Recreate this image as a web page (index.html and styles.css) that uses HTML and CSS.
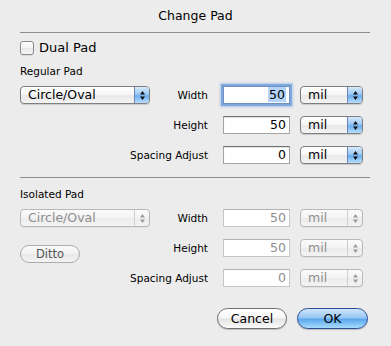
FILE: index.html
```html
<!DOCTYPE html>
<html>
<head>
<meta charset="utf-8">
<title>Change Pad</title>
<link rel="stylesheet" href="styles.css">
</head>
<body>
<div class="dialog">
  <div class="title">Change Pad</div>
  <div class="sep"></div>

  <div class="check"><span class="box"></span><span class="check-text">Dual Pad</span></div>

  <div class="group-label">Regular Pad</div>
  <div class="grid">
    <div class="popup wide"><span class="popup-text">Circle/Oval</span><span class="arrows"><svg width="7" height="11" viewBox="0 0 7 11"><path d="M3.5 1 L6 4.5 L1 4.5 Z M3.5 10 L6 6.5 L1 6.5 Z" fill="#111"/></svg></span></div>
    <div class="lbl">Width</div>
    <div class="field focus"><span class="sel">50</span></div>
    <div class="popup unit"><span class="popup-text">mil</span><span class="arrows"><svg width="7" height="11" viewBox="0 0 7 11"><path d="M3.5 1 L6 4.5 L1 4.5 Z M3.5 10 L6 6.5 L1 6.5 Z" fill="#111"/></svg></span></div>

    <div class="empty"></div>
    <div class="lbl">Height</div>
    <div class="field">50</div>
    <div class="popup unit"><span class="popup-text">mil</span><span class="arrows"><svg width="7" height="11" viewBox="0 0 7 11"><path d="M3.5 1 L6 4.5 L1 4.5 Z M3.5 10 L6 6.5 L1 6.5 Z" fill="#111"/></svg></span></div>

    <div class="empty"></div>
    <div class="lbl">Spacing Adjust</div>
    <div class="field">0</div>
    <div class="popup unit"><span class="popup-text">mil</span><span class="arrows"><svg width="7" height="11" viewBox="0 0 7 11"><path d="M3.5 1 L6 4.5 L1 4.5 Z M3.5 10 L6 6.5 L1 6.5 Z" fill="#111"/></svg></span></div>
  </div>

  <div class="sep sep-mid"></div>

  <div class="group-label">Isolated Pad</div>
  <div class="grid disabled">
    <div class="popup wide"><span class="popup-text">Circle/Oval</span><span class="arrows"><svg width="7" height="11" viewBox="0 0 7 11"><path d="M3.5 1 L6 4.5 L1 4.5 Z M3.5 10 L6 6.5 L1 6.5 Z" fill="#9a9a9a"/></svg></span></div>
    <div class="lbl">Width</div>
    <div class="field">50</div>
    <div class="popup unit"><span class="popup-text">mil</span><span class="arrows"><svg width="7" height="11" viewBox="0 0 7 11"><path d="M3.5 1 L6 4.5 L1 4.5 Z M3.5 10 L6 6.5 L1 6.5 Z" fill="#9a9a9a"/></svg></span></div>

    <div class="ditto-cell"><span class="ditto">Ditto</span></div>
    <div class="lbl">Height</div>
    <div class="field">50</div>
    <div class="popup unit"><span class="popup-text">mil</span><span class="arrows"><svg width="7" height="11" viewBox="0 0 7 11"><path d="M3.5 1 L6 4.5 L1 4.5 Z M3.5 10 L6 6.5 L1 6.5 Z" fill="#9a9a9a"/></svg></span></div>

    <div class="empty"></div>
    <div class="lbl">Spacing Adjust</div>
    <div class="field">0</div>
    <div class="popup unit"><span class="popup-text">mil</span><span class="arrows"><svg width="7" height="11" viewBox="0 0 7 11"><path d="M3.5 1 L6 4.5 L1 4.5 Z M3.5 10 L6 6.5 L1 6.5 Z" fill="#9a9a9a"/></svg></span></div>
  </div>

  <div class="buttons">
    <span class="btn cancel">Cancel</span>
    <span class="btn ok">OK</span>
  </div>
</div>
</body>
</html>
```

FILE: styles.css
```css
html, body {
  margin: 0;
  padding: 0;
  background: #ececec;
}

.dialog {
  width: 391px;
  height: 346px;
  background: #ececec;
  font-family: "DejaVu Sans", "Noto Sans", sans-serif;
  color: #000;
  box-sizing: border-box;
  overflow: hidden;
}

.title {
  height: 32px;
  line-height: 32px;
  text-align: center;
  font-size: 12.5px;
}

.sep {
  height: 1px;
  background: #8e8e8e;
  margin: 0 21px 0 20px;
}

.sep-mid {
  margin-top: 13px;
}

.check {
  display: flex;
  align-items: center;
  gap: 5px;
  margin: 8px 0 0 20px;
  height: 14px;
}

.box {
  width: 12px;
  height: 12px;
  border: 1px solid #8a8a8a;
  border-radius: 3px;
  background: linear-gradient(#ffffff, #f3f3f3 50%, #e6e6e6 50%, #f8f8f8);
  box-shadow: 0 1px 0 rgba(0,0,0,0.08);
}

.check-text {
  font-size: 13px;
  line-height: 14px;
}

.group-label {
  font-size: 10.5px;
  line-height: 14px;
  height: 14px;
  margin: 9px 0 0 20px;
}

.grid {
  display: grid;
  grid-template-columns: 130px 58px 82px 73px;
  grid-auto-rows: 18px;
  row-gap: 12px;
  margin: 8px 0 0 20px;
}

.grid.disabled {
  margin-top: 8px;
}

.lbl {
  font-size: 10.5px;
  text-align: right;
  align-self: center;
  white-space: nowrap;
  direction: rtl;
}

.field {
  margin-left: 15px;
  background: #fff;
  border: 1px solid #a4a4a4;
  border-top-color: #6f6f6f;
  box-shadow: inset 0 1px 1px rgba(0,0,0,0.12);
  font-size: 12.5px;
  line-height: 16px;
  text-align: right;
  padding-right: 3px;
  box-sizing: border-box;
}

.field.focus {
  box-shadow: 0 0 0 2px #7fa9dc, 0 0 2px 3px rgba(110,160,225,0.45);
  border-color: #6f8fbf;
}

.sel {
  background: #b5d4fd;
  padding: 0 1px;
}

.popup {
  display: flex;
  align-items: stretch;
  border: 1px solid #7e7e7e;
  border-radius: 4px;
  background: linear-gradient(#ffffff, #f7f7f7 45%, #e8e8e8 55%, #f4f4f4);
  box-shadow: 0 1px 1px rgba(0,0,0,0.15);
  box-sizing: border-box;
  overflow: hidden;
}

.popup.wide {
  width: 130px;
}

.popup.unit {
  margin-left: 10px;
  width: 63px;
}

.popup-text {
  flex: 1;
  font-size: 12.5px;
  line-height: 16px;
  padding-left: 7px;
  white-space: nowrap;
}

.arrows {
  width: 14px;
  display: flex;
  align-items: center;
  justify-content: center;
  border-left: 1px solid #6c86b5;
  background: linear-gradient(#d5e9fc, #9cc9f3 45%, #6aaef0 55%, #b9defd);
}

.disabled .popup {
  border-color: #b8b8b8;
  box-shadow: 0 1px 0 rgba(0,0,0,0.05);
  background: linear-gradient(#fbfbfb, #f3f3f3 50%, #ececec 50%, #f3f3f3);
}

.disabled .popup-text {
  color: #8e8e8e;
}

.disabled .arrows {
  background: none;
  border-left: 1px solid #cfcfcf;
}

.disabled .field {
  color: #8e8e8e;
  border-color: #c6c6c6;
  border-top-color: #b2b2b2;
  box-shadow: none;
}

.ditto-cell {
  display: flex;
  align-items: flex-start;
}

.ditto {
  margin-top: 6px;
  width: 60px;
  height: 18px;
  box-sizing: border-box;
  border: 1px solid #acacac;
  border-radius: 9px;
  background: linear-gradient(#fbfbfb, #f1f1f1 50%, #e8e8e8 50%, #f4f4f4);
  font-size: 11.5px;
  line-height: 16px;
  text-align: center;
  color: #555;
}

.buttons {
  display: flex;
  justify-content: flex-end;
  gap: 10px;
  margin: 21px 23px 0 0;
}

.btn {
  height: 21px;
  box-sizing: border-box;
  border-radius: 11px;
  font-size: 12.5px;
  line-height: 19px;
  text-align: center;
  box-shadow: 0 1px 1px rgba(0,0,0,0.2);
}

.cancel {
  width: 70px;
  border: 1px solid #6f6f6f;
  background: linear-gradient(#ffffff, #f6f6f6 45%, #e4e4e4 55%, #fbfbfb);
}

.ok {
  width: 71px;
  border: 1px solid #2c4e96;
  background: linear-gradient(#cfe6fb, #97c8f3 45%, #5ba8ee 55%, #a9dcfd);
}
```
